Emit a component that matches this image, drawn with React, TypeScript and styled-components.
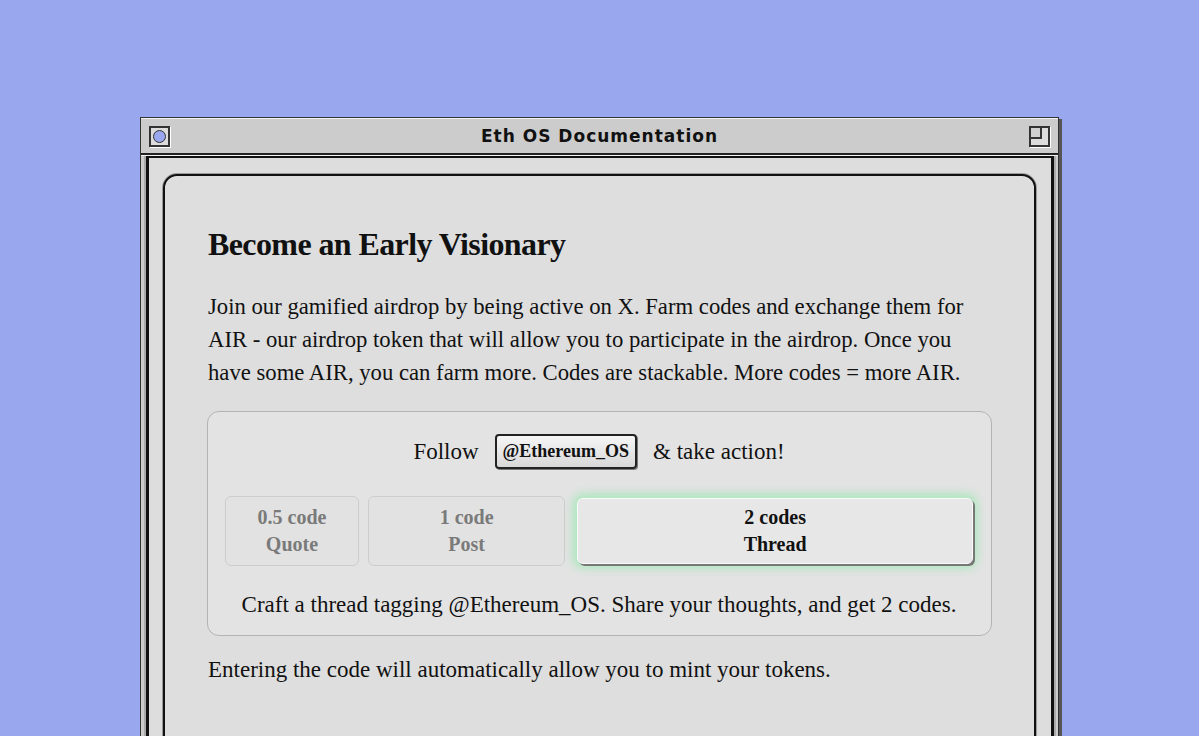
import React from "react";
import styled, { createGlobalStyle } from "styled-components";

const Global = createGlobalStyle`
  html, body { margin: 0; padding: 0; }
  body {
    background: #99a8ee;
    height: 736px;
    overflow: hidden;
    font-family: "Liberation Serif", "Times New Roman", serif;
  }
`;

const Page = styled.div`
  padding: 117px 0 0 140px;
`;

const Window = styled.div`
  width: 917px;
  height: 720px;
  background: #cccccc;
  border: 1px solid #333;
  box-shadow: 3px 2px 0 #555;
  display: flex;
  flex-direction: column;
`;

const TitleBar = styled.div`
  height: 34px;
  display: flex;
  align-items: center;
  justify-content: space-between;
  padding: 0 8px;
  border-bottom: 2px solid #222;
  border-top: 1px solid #f2f2f2;
  background: #cccccc;
`;

const TitleText = styled.div`
  font-family: "DejaVu Sans", sans-serif;
  font-weight: bold;
  font-size: 17px;
  letter-spacing: 1px;
  color: #111;
`;

const CloseBox = styled.div`
  width: 17px;
  height: 17px;
  border: 2px solid #333;
  background: #dcdcdc;
  box-shadow: 1px 1px 0 #fff;
  display: flex;
  align-items: center;
  justify-content: center;
`;

const Circle = styled.div`
  width: 11px;
  height: 11px;
  border-radius: 50%;
  background: #99a8ee;
  border: 1px solid #333;
`;

const ZoomBox = styled.div`
  width: 17px;
  height: 17px;
  border: 2px solid #333;
  background: #dcdcdc;
  box-shadow: 1px 1px 0 #fff;
  position: relative;
`;

const ZoomInner = styled.div`
  position: absolute;
  left: 0;
  top: 0;
  width: 9px;
  height: 9px;
  border-right: 2px solid #333;
  border-bottom: 2px solid #333;
  background: #cfcfcf;
`;

const Frame = styled.div`
  flex: 1;
  padding: 0 4px 0 5px;
  border-top: 1px solid #f4f4f4;
  display: flex;
`;

const InnerFrame = styled.div`
  flex: 1;
  border: 3px solid #111;
  border-top: 2px solid #111;
  background: #dddddd;
  box-shadow: -2px 0 0 #aaa, 2px 0 0 #aaa;
  padding: 16px 15px 0 14px;
  display: flex;
`;

const Panel = styled.div`
  flex: 1;
  border: 2px solid #111;
  border-radius: 14px;
  box-shadow: 0 0 0 1px #9a9a9a;
  background: #dedede;
  padding: 48px 42px 0 43px;
`;

const Heading = styled.h1`
  margin: 0 0 26px 0;
  font-size: 32px;
  line-height: 40px;
  font-weight: bold;
  color: #111;
  letter-spacing: -0.6px;
`;

const Paragraph = styled.p`
  margin: 0;
  font-size: 22.7px;
  line-height: 33px;
  color: #111;
`;

const ActionBox = styled.div`
  margin: 22px 0 0 -1px;
  width: 785px;
  box-sizing: border-box;
  border: 1px solid #b3b3b3;
  border-radius: 12px;
  background: #e3e3e3;
  padding: 22px 18px 15px 17px;
  display: flex;
  flex-direction: column;
  align-items: stretch;
`;

const FollowRow = styled.div`
  display: flex;
  justify-content: center;
  align-items: center;
  gap: 16px;
  font-size: 23px;
  color: #111;
`;

const HandleButton = styled.button`
  font-family: "Liberation Serif", serif;
  font-weight: bold;
  font-size: 18px;
  color: #111;
  height: 35px;
  padding: 0 6px;
  border: 2px solid #222;
  border-radius: 4px;
  background: linear-gradient(#f6f6f6, #d8d8d8);
  box-shadow: 1px 1px 0 #777;
`;

const Tabs = styled.div`
  display: flex;
  gap: 9px;
  margin-top: 27px;
`;

const Tab = styled.div<{ $grow: number; $active?: boolean }>`
  flex: ${(p) => p.$grow} 1 0;
  box-sizing: border-box;
  display: flex;
  flex-direction: column;
  align-items: center;
  justify-content: center;
  font-weight: bold;
  font-size: 20px;
  line-height: 27px;
  border-radius: 6px;
  color: ${(p) => (p.$active ? "#111" : "#7a7a7a")};
  background: ${(p) => (p.$active ? "#e7e7e7" : "#e2e2e2")};
  border: 1px solid ${(p) => (p.$active ? "#fafafa" : "#cdcdcd")};
  box-shadow: ${(p) =>
    p.$active
      ? "2px 2px 0 #777, 0 0 10px 4px rgba(130, 235, 160, 0.6)"
      : "none"};
  margin: ${(p) => (p.$active ? "2px 0 2px 3px" : "0")};
  height: ${(p) => (p.$active ? "66px" : "70px")};
`;

const Description = styled.div`
  margin-top: 24px;
  text-align: center;
  font-size: 23px;
  line-height: 30px;
  color: #111;
`;

const Footer = styled.p`
  margin: 17px 0 0 0;
  font-size: 23px;
  line-height: 33px;
  color: #111;
`;

export default function App() {
  return (
    <>
      <Global />
      <Page>
        <Window>
          <TitleBar>
            <CloseBox>
              <Circle />
            </CloseBox>
            <TitleText>Eth OS Documentation</TitleText>
            <ZoomBox>
              <ZoomInner />
            </ZoomBox>
          </TitleBar>
          <Frame>
            <InnerFrame>
              <Panel>
                <Heading>Become an Early Visionary</Heading>
                <Paragraph>
                  Join our gamified airdrop by being active on X. Farm codes and exchange them for
                  <br />
                  AIR - our airdrop token that will allow you to participate in the airdrop. Once you
                  <br />
                  have some AIR, you can farm more. Codes are stackable. More codes = more AIR.
                </Paragraph>
                <ActionBox>
                  <FollowRow>
                    <span>Follow</span>
                    <HandleButton>@Ethereum_OS</HandleButton>
                    <span>&amp; take action!</span>
                  </FollowRow>
                  <Tabs>
                    <Tab $grow={133}>
                      <span>0.5 code</span>
                      <span>Quote</span>
                    </Tab>
                    <Tab $grow={197}>
                      <span>1 code</span>
                      <span>Post</span>
                    </Tab>
                    <Tab $grow={397} $active>
                      <span>2 codes</span>
                      <span>Thread</span>
                    </Tab>
                  </Tabs>
                  <Description>
                    Craft a thread tagging @Ethereum_OS. Share your thoughts, and get 2 codes.
                  </Description>
                </ActionBox>
                <Footer>Entering the code will automatically allow you to mint your tokens.</Footer>
              </Panel>
            </InnerFrame>
          </Frame>
        </Window>
      </Page>
    </>
  );
}
